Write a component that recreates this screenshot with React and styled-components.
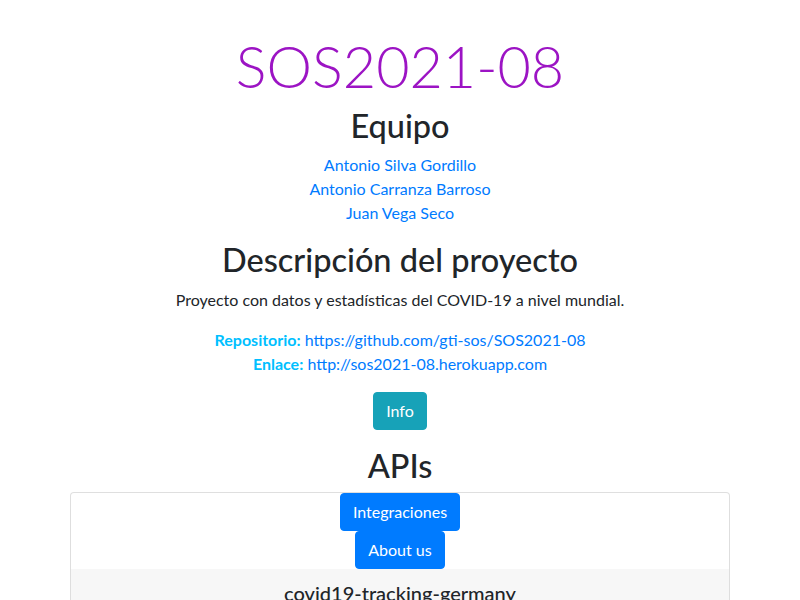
import React from 'react';
import styled, { createGlobalStyle } from 'styled-components';

const GlobalStyle = createGlobalStyle`
	body {
		margin: 0;
		font-family: Lato, "Liberation Sans", sans-serif;
		font-size: 16px;
		line-height: 1.5;
		color: #212529;
		background: #fff;
	}
`;

const Main = styled.main`
	padding-top: 32px;
	text-align: center;
`;

const Title = styled.h1`
	margin: 0 0 8px;
	height: 67px;
	font-size: 57.5px;
	font-weight: 300;
	line-height: 67px;
	color: #9c14c4;
`;

const Heading = styled.h2`
	margin: 0 0 ${(props) => props.$gap || 8}px;
	font-size: 32.5px;
	font-weight: 500;
	line-height: 38.4px;
`;

const NameList = styled.div`
	margin-bottom: 16px;
`;

const Link = styled.a`
	display: block;
	color: #007bff;
	text-decoration: none;
`;

const Text = styled.p`
	margin: 0 0 16px;
`;

const Info = styled.div`
	margin-bottom: 16px;
`;

const Line = styled.div`
	a {
		color: #007bff;
		text-decoration: none;
	}
`;

const Label = styled.strong`
	color: #00bfff;
	font-weight: 700;
`;

const Button = styled.button`
	display: inline-block;
	padding: 6px 12px;
	border: 1px solid ${(props) => props.$color};
	border-radius: 4px;
	background: ${(props) => props.$color};
	color: #fff;
	font-family: inherit;
	font-size: 16px;
	line-height: 1.5;
	cursor: pointer;
`;

const Section = styled.div`
	margin-bottom: ${(props) => props.$gap || 0}px;
`;

const Card = styled.div`
	margin: 0 70px;
	border: 1px solid rgba(0, 0, 0, 0.125);
	border-bottom: none;
	border-radius: 4px 4px 0 0;
	overflow: hidden;
`;

const ButtonStack = styled.div`
	display: flex;
	flex-direction: column;
	align-items: center;
`;

const ApiRow = styled.div`
	background: #f7f7f7;
	padding: 12px 0 40px;
`;

const ApiName = styled.h5`
	margin: 0;
	font-size: 20px;
	font-weight: 500;
	line-height: 1.2;
`;

export default function App() {
	return (
		<>
			<GlobalStyle />
			<Main>
				<Title>SOS2021-08</Title>
				<Heading>Equipo</Heading>
				<NameList>
					<Link href="#">Antonio Silva Gordillo</Link>
					<Link href="#">Antonio Carranza Barroso</Link>
					<Link href="#">Juan Vega Seco</Link>
				</NameList>
				<Heading>Descripción del proyecto</Heading>
				<Text>Proyecto con datos y estadísticas del COVID-19 a nivel mundial.</Text>
				<Info>
					<Line>
						<Label>Repositorio:</Label> <a href="#">https://github.com/gti-sos/SOS2021-08</a>
					</Line>
					<Line>
						<Label>Enlace:</Label> <a href="#">http://sos2021-08.herokuapp.com</a>
					</Line>
				</Info>
				<Section $gap={17}>
					<Button $color="#17a2b8">Info</Button>
				</Section>
				<Heading $gap={7}>APIs</Heading>
				<Card>
					<ButtonStack>
						<Button $color="#007bff">Integraciones</Button>
						<Button $color="#007bff">About us</Button>
					</ButtonStack>
					<ApiRow>
						<ApiName>covid19-tracking-germany</ApiName>
					</ApiRow>
				</Card>
			</Main>
		</>
	);
}
